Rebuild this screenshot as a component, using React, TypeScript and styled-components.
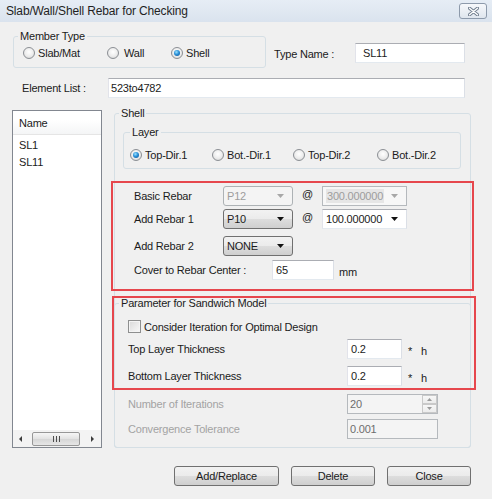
import React from 'react';
import styled, { createGlobalStyle, css } from 'styled-components';

const GlobalStyle = createGlobalStyle`
  html, body {
    margin: 0;
    padding: 0;
    background: #f0f0f0;
  }
  body {
    font-family: 'Liberation Sans', Arial, sans-serif;
    font-size: 11px;
    letter-spacing: -0.2px;
    color: #1b1b1b;
  }
  * {
    box-sizing: border-box;
  }
`;

type ComboKind = 'list' | 'edit' | 'disabled' | 'disabledEdit';

const Arrow = ({ color }: { color: string }) => (
  <svg width="7" height="4" viewBox="0 0 7 4">
    <path d="M0 0h7L3.5 4z" fill={color} />
  </svg>
);

const App = () => {
  return (
    <Window>
      <GlobalStyle />
      <TitleBar>
        <Title>Slab/Wall/Shell Rebar for Checking</Title>
        <CloseBtn>
          <svg width="11" height="9" viewBox="0 0 11 9">
            <path d="M1.5 1.2l8 6.6M9.5 1.2l-8 6.6" stroke="#6f7d8e" strokeWidth="3.2" strokeLinecap="round" />
            <path d="M1.5 1.2l8 6.6M9.5 1.2l-8 6.6" stroke="#ffffff" strokeWidth="1.4" strokeLinecap="round" />
          </svg>
        </CloseBtn>
      </TitleBar>

      <Body>
        <TopRow>
          <MemberGroup>
            <Legend $left={4}>Member Type</Legend>
            <RadioRow $top={3} $left={9}>
              <RadioItem $w={84}>
                <RadioDot />
                Slab/Mat
              </RadioItem>
              <RadioItem $w={64} $gap={5}>
                <RadioDot />
                Wall
              </RadioItem>
              <RadioItem $w={60}>
                <RadioDot $checked />
                Shell
              </RadioItem>
            </RadioRow>
          </MemberGroup>
          <TypeLabel>Type Name :</TypeLabel>
          <TextBox $w={110} $pad={7} style={{ marginTop: 13 }}>
            SL11
          </TextBox>
        </TopRow>

        <ElementRow>
          <ElementLabel>Element List :</ElementLabel>
          <TextBox $w={357} $pad={2}>
            523to4782
          </TextBox>
        </ElementRow>

        <MainRow>
          <NameList>
            <ListHeader>Name</ListHeader>
            <ListItems>
              <ListItem>SL1</ListItem>
              <ListItem>SL11</ListItem>
            </ListItems>
            <HScroll>
              <ScrollArrow $dir="left" />
              <ScrollThumb>
                <Grip />
                <Grip />
                <Grip />
              </ScrollThumb>
              <ScrollArrow $dir="right" />
            </HScroll>
          </NameList>

          <ShellGroup>
            <Legend $left={4}>Shell</Legend>
            <LayerGroup>
              <Legend $left={6}>Layer</Legend>
              <RadioRow $top={9} $left={6}>
                <RadioItem $w={82}>
                  <RadioDot $checked />
                  Top-Dir.1
                </RadioItem>
                <RadioItem $w={81}>
                  <RadioDot />
                  Bot.-Dir.1
                </RadioItem>
                <RadioItem $w={84}>
                  <RadioDot />
                  Top-Dir.2
                </RadioItem>
                <RadioItem $w={80}>
                  <RadioDot />
                  Bot.-Dir.2
                </RadioItem>
              </RadioRow>
            </LayerGroup>

            <RedBox>
              <FormRow $top={0}>
                <FieldLabel $w={89}>Basic Rebar</FieldLabel>
                <Combo $kind="disabled" $w={70}>
                  <span>P12</span>
                  <Arrow color="#a8a8a8" />
                </Combo>
                <At>@</At>
                <Combo $kind="disabledEdit" $w={85}>
                  <Selected>300.000000</Selected>
                  <Arrow color="#a8a8a8" />
                </Combo>
              </FormRow>
              <FormRow $top={3}>
                <FieldLabel $w={89}>Add Rebar 1</FieldLabel>
                <Combo $kind="list" $w={70}>
                  <span>P10</span>
                  <Arrow color="#111" />
                </Combo>
                <At>@</At>
                <Combo $kind="edit" $w={85}>
                  <span>100.000000</span>
                  <Arrow color="#111" />
                </Combo>
              </FormRow>
              <FormRow $top={7}>
                <FieldLabel $w={89}>Add Rebar 2</FieldLabel>
                <Combo $kind="list" $w={70}>
                  <span>NONE</span>
                  <Arrow color="#111" />
                </Combo>
              </FormRow>
              <FormRow $top={4}>
                <FieldLabel $w={138}>Cover to Rebar Center :</FieldLabel>
                <TextBox $w={62} $pad={3}>
                  65
                </TextBox>
                <Unit>mm</Unit>
              </FormRow>
            </RedBox>

            <SandwichWrap>
              <SandwichGroup>
                <Legend $left={4}>Parameter for Sandwich Model</Legend>
                <SandwichBody>
                  <CheckRow>
                    <CheckBox />
                    Consider Iteration for Optimal Design
                  </CheckRow>
                  <FormRow $top={6}>
                    <FieldLabel $w={219}>Top Layer Thickness</FieldLabel>
                    <TextBox $w={55} $pad={3}>
                      0.2
                    </TextBox>
                    <Times>
                      <span>*</span>
                      <span>h</span>
                    </Times>
                  </FormRow>
                  <FormRow $top={7}>
                    <FieldLabel $w={219}>Bottom Layer Thickness</FieldLabel>
                    <TextBox $w={55} $pad={3}>
                      0.2
                    </TextBox>
                    <Times>
                      <span>*</span>
                      <span>h</span>
                    </Times>
                  </FormRow>
                  <FormRow $top={8}>
                    <FieldLabel $w={219} $disabled>
                      Number of Iterations
                    </FieldLabel>
                    <TextBox $w={91} $pad={2} $disabled>
                      <span>20</span>
                      <Spin>
                        <SpinBtn>
                          <svg width="5" height="3" viewBox="0 0 5 3">
                            <path d="M0 3h5L2.5 0z" fill="#9a9a9a" />
                          </svg>
                        </SpinBtn>
                        <SpinBtn>
                          <svg width="5" height="3" viewBox="0 0 5 3">
                            <path d="M0 0h5L2.5 3z" fill="#9a9a9a" />
                          </svg>
                        </SpinBtn>
                      </Spin>
                    </TextBox>
                  </FormRow>
                  <FormRow $top={5}>
                    <FieldLabel $w={219} $disabled>
                      Convergence Tolerance
                    </FieldLabel>
                    <TextBox $w={91} $pad={2} $disabled>
                      0.001
                    </TextBox>
                  </FormRow>
                </SandwichBody>
              </SandwichGroup>
              <Highlight />
            </SandwichWrap>
          </ShellGroup>
        </MainRow>

        <ButtonRow>
          <Button $w={105}>Add/Replace</Button>
          <Button $w={84}>Delete</Button>
          <Button $w={84}>Close</Button>
        </ButtonRow>
      </Body>
    </Window>
  );
};

export default App;

const Window = styled.div`
  width: 492px;
  height: 499px;
  background: #f0f0f0;
  overflow: hidden;
  display: flex;
  flex-direction: column;
`;

const TitleBar = styled.div`
  height: 22px;
  flex: none;
  display: flex;
  align-items: center;
  justify-content: space-between;
  padding: 0 5px 0 6px;
  background: linear-gradient(#e6edf5, #dae3ee);
`;

const Title = styled.span`
  font-size: 12px;
  letter-spacing: -0.15px;
  color: #1f1f1f;
`;

const CloseBtn = styled.div`
  width: 28px;
  height: 16px;
  border: 1px solid #8d9aab;
  border-radius: 3px;
  background: linear-gradient(#f6f8fb, #dfe6ee);
  display: flex;
  align-items: center;
  justify-content: center;
`;

const Body = styled.div`
  flex: 1;
  padding: 0 21px 0 12px;
  display: flex;
  flex-direction: column;
`;

const Fieldset = styled.fieldset`
  margin: 0;
  padding: 0;
  min-width: 0;
  border: 1px solid #d5dfe5;
  border-radius: 3px;
`;

const Legend = styled.legend<{ $left: number }>`
  margin-left: ${p => p.$left}px;
  padding: 0 2px;
  line-height: 13px;
`;

const TopRow = styled.div`
  display: flex;
  align-items: flex-start;
  margin-top: 8px;
`;

const MemberGroup = styled(Fieldset)`
  width: 253px;
  margin-left: 1px;
  padding-bottom: 7px;
`;

const RadioRow = styled.div<{ $top: number; $left: number }>`
  display: flex;
  height: 14px;
  align-items: center;
  margin-top: ${p => p.$top}px;
  margin-left: ${p => p.$left}px;
`;

const RadioItem = styled.div<{ $w: number; $gap?: number }>`
  width: ${p => p.$w}px;
  display: flex;
  align-items: center;
  gap: ${p => p.$gap ?? 3}px;
  white-space: nowrap;
`;

const RadioDot = styled.span<{ $checked?: boolean }>`
  width: 12px;
  height: 12px;
  flex: none;
  border-radius: 50%;
  border: 1px solid #8b8f94;
  background: radial-gradient(circle at 50% 40%, #ffffff 0%, #ececec 55%, #cdcdcd 100%);
  display: flex;
  align-items: center;
  justify-content: center;

  &::after {
    content: '';
    width: 6px;
    height: 6px;
    border-radius: 50%;
    display: ${p => (p.$checked ? 'block' : 'none')};
    background: radial-gradient(circle at 40% 35%, #9be3ff 0%, #2a90d8 45%, #0b4c8a 100%);
  }
`;

const TypeLabel = styled.span`
  width: 81px;
  margin-left: 8px;
  margin-top: 18px;
  line-height: 13px;
`;

const TextBox = styled.div<{ $w: number; $pad: number; $disabled?: boolean }>`
  width: ${p => p.$w}px;
  height: 20px;
  flex: none;
  display: flex;
  align-items: center;
  justify-content: space-between;
  padding-left: ${p => p.$pad}px;
  border: 1px solid;
  border-color: #abadb3 #dbdfe6 #e3e9ef #e2e3ea;
  background: #ffffff;
  ${p =>
    p.$disabled &&
    css`
      border-color: #b5b9bd;
      background: #f4f4f4;
      color: #6d6d6d;
    `}
`;

const ElementRow = styled.div`
  display: flex;
  align-items: center;
  margin-top: 10px;
`;

const ElementLabel = styled.span`
  width: 86px;
  margin-left: 10px;
`;

const MainRow = styled.div`
  display: flex;
  align-items: flex-start;
  margin-top: 9px;
`;

const NameList = styled.div`
  width: 90px;
  height: 338px;
  margin-top: 3px;
  border: 1px solid #828790;
  background: #ffffff;
  display: flex;
  flex-direction: column;
`;

const ListHeader = styled.div`
  height: 24px;
  padding-left: 6px;
  display: flex;
  align-items: center;
  border-bottom: 1px solid #e5e5e5;
  background: linear-gradient(#ffffff 0%, #ffffff 40%, #f4f5f6 100%);
`;

const ListItems = styled.div`
  flex: 1;
  padding: 2px 0 0 6px;
`;

const ListItem = styled.div`
  line-height: 17px;
`;

const HScroll = styled.div`
  height: 17px;
  display: flex;
  align-items: center;
  padding: 0 4px 0 6px;
  background: #f3f3f3;
`;

const ScrollArrow = styled.span<{ $dir: 'left' | 'right' }>`
  width: 0;
  height: 0;
  border-top: 3px solid transparent;
  border-bottom: 3px solid transparent;
  ${p =>
    p.$dir === 'left'
      ? css`
          border-right: 3px solid #3c3c3c;
          margin-right: 10px;
        `
      : css`
          border-left: 3px solid #3c3c3c;
          margin-left: 11px;
        `}
`;

const ScrollThumb = styled.div`
  width: 48px;
  height: 14px;
  border: 1px solid #979797;
  border-radius: 2px;
  background: linear-gradient(#f6f6f6, #e2e2e2 50%, #d6d6d6 51%, #e6e6e6);
  display: flex;
  align-items: center;
  justify-content: center;
  gap: 2px;
`;

const Grip = styled.span`
  width: 1px;
  height: 6px;
  background: #4d4d4d;
`;

const ShellGroup = styled(Fieldset)`
  width: 357px;
  margin-left: 12px;
`;

const LayerGroup = styled(Fieldset)`
  width: 338px;
  margin: 6px 0 0 8px;
  padding-bottom: 6px;
`;

const RedBox = styled.div`
  width: 363px;
  margin: 12px 0 0 -4px;
  padding: 3px 0 9px 21px;
  border: 2px solid #e6474d;
`;

const FormRow = styled.div<{ $top: number }>`
  display: flex;
  align-items: center;
  height: 20px;
  margin-top: ${p => p.$top}px;
`;

const FieldLabel = styled.span<{ $w: number; $disabled?: boolean }>`
  width: ${p => p.$w}px;
  flex: none;
  white-space: nowrap;
  color: ${p => (p.$disabled ? '#a3a3a3' : 'inherit')};
`;

const comboKinds = {
  list: css`
    border: 1px solid #707070;
    border-radius: 3px;
    background: linear-gradient(#f2f2f2 0%, #ebebeb 50%, #dddddd 51%, #cfcfcf 100%);
  `,
  edit: css`
    border: 1px solid;
    border-color: #abadb3 #dbdfe6 #e3e9ef #e2e3ea;
    background: #ffffff;
  `,
  disabled: css`
    border: 1px solid #adb2b5;
    border-radius: 3px;
    background: #f4f4f4;
    color: #9d9d9d;
  `,
  disabledEdit: css`
    border: 1px solid #b5b9bd;
    background: #f7f7f7;
    color: #9d9d9d;
  `,
};

const Combo = styled.div<{ $kind: ComboKind; $w: number }>`
  width: ${p => p.$w}px;
  height: 20px;
  flex: none;
  display: flex;
  align-items: center;
  justify-content: space-between;
  padding: 0 8px 0 3px;
  ${p => comboKinds[p.$kind]}
`;

const Selected = styled.span`
  background: #e6e6e6;
  padding: 1px 1px;
`;

const At = styled.span`
  width: 29px;
  padding-left: 9px;
  margin-top: -4px;
`;

const Unit = styled.span`
  margin-left: 5px;
  margin-top: 3px;
`;

const SandwichWrap = styled.div`
  position: relative;
  margin: 6px -1px -1px -1px;
`;

const SandwichGroup = styled(Fieldset)`
  padding-bottom: 8px;
`;

const SandwichBody = styled.div`
  padding-left: 13px;
`;

const CheckRow = styled.div`
  display: flex;
  align-items: center;
  gap: 3px;
  height: 13px;
  margin-top: 10px;
`;

const CheckBox = styled.span`
  width: 13px;
  height: 13px;
  border: 1px solid #8e8f8f;
  background: linear-gradient(135deg, #d9d9d9, #f9f9f9);
  box-shadow: inset 0 0 0 1px #f4f4f4;
`;

const Times = styled.span`
  display: flex;
  gap: 9px;
  margin-left: 6px;
  margin-top: 3px;
`;

const Spin = styled.div`
  width: 15px;
  height: 18px;
  display: flex;
  flex-direction: column;
`;

const SpinBtn = styled.div`
  flex: 1;
  display: flex;
  align-items: center;
  justify-content: center;
  border: 1px solid #c9c9c9;
  background: linear-gradient(#f7f7f7, #ececec);
`;

const Highlight = styled.div`
  position: absolute;
  left: -2px;
  top: -1px;
  width: 364px;
  height: 94px;
  border: 2px solid #e6474d;
  pointer-events: none;
`;

const ButtonRow = styled.div`
  display: flex;
  justify-content: flex-end;
  gap: 12px;
  margin-top: 18px;
`;

const Button = styled.div<{ $w: number }>`
  width: ${p => p.$w}px;
  height: 20px;
  display: flex;
  align-items: center;
  justify-content: center;
  border: 1px solid #707070;
  border-radius: 3px;
  background: linear-gradient(#f2f2f2 0%, #ebebeb 50%, #dddddd 51%, #cfcfcf 100%);
`;
